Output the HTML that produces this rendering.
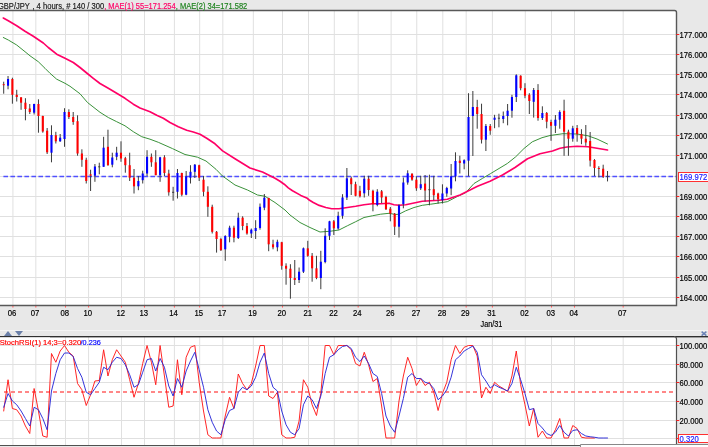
<!DOCTYPE html>
<html><head><meta charset="utf-8"><style>
html,body{margin:0;padding:0;width:708px;height:447px;overflow:hidden;background:#e8e8e8;}
</style></head><body>
<svg width="708" height="447" viewBox="0 0 708 447" style="display:block;font-family:'Liberation Sans',sans-serif;will-change:transform">
<rect x="0" y="0" width="708" height="447" fill="#e8e8e8"/>
<rect x="0" y="10" width="676" height="295" fill="#ffffff"/>
<rect x="0" y="297" width="676" height="1" fill="#e0e0e0"/><rect x="0" y="277" width="676" height="1" fill="#e0e0e0"/><rect x="0" y="256" width="676" height="1" fill="#e0e0e0"/><rect x="0" y="236" width="676" height="1" fill="#e0e0e0"/><rect x="0" y="216" width="676" height="1" fill="#e0e0e0"/><rect x="0" y="196" width="676" height="1" fill="#e0e0e0"/><rect x="0" y="176" width="676" height="1" fill="#e0e0e0"/><rect x="0" y="155" width="676" height="1" fill="#e0e0e0"/><rect x="0" y="135" width="676" height="1" fill="#e0e0e0"/><rect x="0" y="115" width="676" height="1" fill="#e0e0e0"/><rect x="0" y="94" width="676" height="1" fill="#e0e0e0"/><rect x="0" y="74" width="676" height="1" fill="#e0e0e0"/><rect x="0" y="54" width="676" height="1" fill="#e0e0e0"/><rect x="0" y="34" width="676" height="1" fill="#e0e0e0"/><rect x="12.42" y="10" width="1" height="295" fill="#e0e0e0"/><rect x="35.33" y="10" width="1" height="295" fill="#e0e0e0"/><rect x="65" y="10" width="1" height="295" fill="#e0e0e0"/><rect x="88.08" y="10" width="1" height="295" fill="#e0e0e0"/><rect x="121" y="10" width="1" height="295" fill="#e0e0e0"/><rect x="144" y="10" width="1" height="295" fill="#e0e0e0"/><rect x="173.9" y="10" width="1" height="295" fill="#e0e0e0"/><rect x="199.17" y="10" width="1" height="295" fill="#e0e0e0"/><rect x="222.33" y="10" width="1" height="295" fill="#e0e0e0"/><rect x="252.83" y="10" width="1" height="295" fill="#e0e0e0"/><rect x="282" y="10" width="1" height="295" fill="#e0e0e0"/><rect x="308" y="10" width="1" height="295" fill="#e0e0e0"/><rect x="333.8" y="10" width="1" height="295" fill="#e0e0e0"/><rect x="357.67" y="10" width="1" height="295" fill="#e0e0e0"/><rect x="390.6" y="10" width="1" height="295" fill="#e0e0e0"/><rect x="416.25" y="10" width="1" height="295" fill="#e0e0e0"/><rect x="442.3" y="10" width="1" height="295" fill="#e0e0e0"/><rect x="465.67" y="10" width="1" height="295" fill="#e0e0e0"/><rect x="491.9" y="10" width="1" height="295" fill="#e0e0e0"/><rect x="524.8" y="10" width="1" height="295" fill="#e0e0e0"/><rect x="551" y="10" width="1" height="295" fill="#e0e0e0"/><rect x="574" y="10" width="1" height="295" fill="#e0e0e0"/><rect x="622.67" y="10" width="1" height="295" fill="#e0e0e0"/>
<line x1="3.4" y1="176.5" x2="676" y2="176.5" stroke="#5050ff" stroke-width="1.5" stroke-dasharray="4.6 2.4"/>
<polyline points="3.30,37.50 8.30,40.00 16.70,45.00 25.00,51.70 30.00,55.80 38.30,61.70 45.00,68.30 50.00,73.30 56.70,79.20 65.00,83.30 70.00,86.25 80.00,93.75 87.50,102.50 100.00,112.30 108.30,117.50 116.70,121.70 125.00,125.80 133.30,131.70 141.70,136.70 150.00,139.20 158.30,142.30 172.50,148.60 185.00,154.50 197.50,157.20 206.00,161.00 216.00,169.30 222.50,176.00 235.00,185.00 247.50,190.00 257.50,195.00 265.00,196.25 275.00,202.50 285.00,210.00 290.00,215.00 300.00,222.50 310.00,227.50 320.00,232.00 330.00,231.25 339.00,230.00 347.30,225.80 355.70,221.70 364.00,217.50 372.30,215.80 380.70,214.20 389.00,213.30 395.70,214.50 399.00,214.20 405.70,210.80 414.00,207.50 422.30,205.30 430.70,204.20 439.00,203.00 447.30,201.70 457.30,196.50 465.70,192.70 474.00,183.50 482.30,178.50 490.70,173.50 499.00,168.50 507.30,163.50 515.70,156.80 524.00,148.50 532.30,141.80 542.00,137.70 550.00,135.50 563.00,133.70 577.00,134.00 588.00,135.80 597.00,139.00 607.50,144.00" fill="none" stroke="#3a923a" stroke-width="1.0" stroke-linejoin="round" stroke-linecap="round"/>
<polyline points="3.30,18.00 8.30,20.80 16.70,25.80 25.00,31.30 33.30,36.30 43.30,43.00 48.30,47.50 56.70,54.20 65.00,58.30 73.30,62.50 80.00,67.50 86.70,73.00 93.30,78.30 100.00,83.50 108.30,88.30 116.70,93.30 125.00,98.30 133.30,104.20 140.00,108.00 150.00,111.70 156.70,115.30 163.30,118.30 170.00,122.50 178.30,126.70 186.70,130.30 193.30,132.00 200.00,134.20 206.70,138.30 215.00,143.80 222.60,150.90 235.00,158.75 250.00,168.00 262.50,172.00 275.00,178.20 280.00,181.25 284.20,184.20 288.30,187.90 292.50,190.80 300.80,195.40 306.70,197.90 309.20,200.00 313.30,202.50 319.20,205.40 325.80,207.50 331.70,208.75 339.00,208.75 347.30,207.50 355.70,206.30 364.00,204.70 372.30,203.70 380.70,203.70 389.00,203.30 394.00,204.70 399.00,205.30 405.70,204.70 414.00,203.00 422.30,201.20 430.70,200.80 439.00,200.30 447.30,199.20 460.00,195.00 467.50,191.25 477.50,186.25 490.00,181.25 502.50,175.00 515.00,167.50 527.50,158.75 540.00,153.75 552.50,151.00 560.00,148.30 567.00,147.00 577.00,146.30 588.00,146.70 600.00,148.75 607.50,150.00" fill="none" stroke="#ff0066" stroke-width="1.65" stroke-linejoin="round" stroke-linecap="round"/>
<rect x="3.20" y="81.7" width="1" height="12.0" fill="#3c3c3c"/><rect x="2.65" y="84.2" width="2.1" height="1.0" fill="#ff0000"/><rect x="7.54" y="76.0" width="1" height="13.3" fill="#3c3c3c"/><rect x="6.99" y="79.0" width="2.1" height="6.7" fill="#0000ff"/><rect x="11.89" y="77.7" width="1" height="26.0" fill="#3c3c3c"/><rect x="11.34" y="79.0" width="2.1" height="15.8" fill="#ff0000"/><rect x="16.23" y="89.8" width="1" height="11.7" fill="#3c3c3c"/><rect x="15.68" y="94.8" width="2.1" height="2.2" fill="#ff0000"/><rect x="20.58" y="97.3" width="1" height="12.5" fill="#3c3c3c"/><rect x="20.03" y="97.3" width="2.1" height="5.4" fill="#ff0000"/><rect x="24.92" y="98.2" width="1" height="22.1" fill="#3c3c3c"/><rect x="24.37" y="102.7" width="2.1" height="6.3" fill="#ff0000"/><rect x="29.26" y="104.0" width="1" height="10.0" fill="#3c3c3c"/><rect x="28.71" y="108.5" width="2.1" height="3.5" fill="#ff0000"/><rect x="33.61" y="103.7" width="1" height="10.8" fill="#3c3c3c"/><rect x="33.06" y="104.0" width="2.1" height="8.7" fill="#0000ff"/><rect x="37.95" y="99.3" width="1" height="33.4" fill="#3c3c3c"/><rect x="37.40" y="104.0" width="2.1" height="12.0" fill="#ff0000"/><rect x="42.30" y="115.7" width="1" height="17.0" fill="#3c3c3c"/><rect x="41.75" y="116.0" width="2.1" height="15.5" fill="#ff0000"/><rect x="46.64" y="128.0" width="1" height="26.0" fill="#3c3c3c"/><rect x="46.09" y="130.7" width="2.1" height="21.6" fill="#ff0000"/><rect x="50.98" y="125.3" width="1" height="37.0" fill="#3c3c3c"/><rect x="50.43" y="135.0" width="2.1" height="17.7" fill="#0000ff"/><rect x="55.33" y="131.8" width="1" height="11.7" fill="#3c3c3c"/><rect x="54.78" y="135.2" width="2.1" height="6.1" fill="#ff0000"/><rect x="59.67" y="134.0" width="1" height="7.8" fill="#3c3c3c"/><rect x="59.12" y="137.7" width="2.1" height="3.6" fill="#0000ff"/><rect x="64.02" y="108.2" width="1" height="38.6" fill="#3c3c3c"/><rect x="63.47" y="112.0" width="2.1" height="27.0" fill="#0000ff"/><rect x="68.36" y="109.3" width="1" height="9.7" fill="#3c3c3c"/><rect x="67.81" y="112.0" width="2.1" height="5.0" fill="#ff0000"/><rect x="72.70" y="112.0" width="1" height="12.8" fill="#3c3c3c"/><rect x="72.15" y="117.0" width="2.1" height="5.0" fill="#ff0000"/><rect x="77.05" y="115.3" width="1" height="40.4" fill="#3c3c3c"/><rect x="76.50" y="121.2" width="2.1" height="32.3" fill="#ff0000"/><rect x="81.39" y="149.3" width="1" height="17.5" fill="#3c3c3c"/><rect x="80.84" y="153.5" width="2.1" height="6.3" fill="#ff0000"/><rect x="85.74" y="157.7" width="1" height="25.8" fill="#3c3c3c"/><rect x="85.19" y="159.8" width="2.1" height="21.2" fill="#ff0000"/><rect x="90.08" y="169.7" width="1" height="21.3" fill="#3c3c3c"/><rect x="89.53" y="174.3" width="2.1" height="1.4" fill="#ff0000"/><rect x="94.42" y="164.0" width="1" height="17.8" fill="#3c3c3c"/><rect x="93.87" y="166.5" width="2.1" height="9.2" fill="#0000ff"/><rect x="98.77" y="162.7" width="1" height="11.6" fill="#3c3c3c"/><rect x="98.22" y="166.3" width="2.1" height="1.0" fill="#3c3c3c"/><rect x="103.11" y="136.8" width="1" height="30.0" fill="#3c3c3c"/><rect x="102.56" y="147.7" width="2.1" height="19.1" fill="#0000ff"/><rect x="107.46" y="129.7" width="1" height="36.0" fill="#3c3c3c"/><rect x="106.91" y="146.8" width="2.1" height="18.4" fill="#ff0000"/><rect x="111.80" y="152.7" width="1" height="14.6" fill="#3c3c3c"/><rect x="111.25" y="157.5" width="2.1" height="7.2" fill="#0000ff"/><rect x="116.14" y="146.8" width="1" height="13.4" fill="#3c3c3c"/><rect x="115.59" y="152.7" width="2.1" height="4.1" fill="#0000ff"/><rect x="120.49" y="141.3" width="1" height="20.5" fill="#3c3c3c"/><rect x="119.94" y="152.7" width="2.1" height="5.8" fill="#ff0000"/><rect x="124.83" y="156.8" width="1" height="15.9" fill="#3c3c3c"/><rect x="124.28" y="158.2" width="2.1" height="7.0" fill="#ff0000"/><rect x="129.18" y="152.7" width="1" height="28.3" fill="#3c3c3c"/><rect x="128.63" y="165.2" width="2.1" height="12.5" fill="#ff0000"/><rect x="133.52" y="169.0" width="1" height="24.5" fill="#3c3c3c"/><rect x="132.97" y="177.7" width="2.1" height="8.6" fill="#ff0000"/><rect x="137.86" y="176.0" width="1" height="14.2" fill="#3c3c3c"/><rect x="137.31" y="181.0" width="2.1" height="5.3" fill="#0000ff"/><rect x="142.21" y="170.7" width="1" height="12.8" fill="#3c3c3c"/><rect x="141.66" y="173.5" width="2.1" height="6.7" fill="#0000ff"/><rect x="146.55" y="150.2" width="1" height="25.8" fill="#3c3c3c"/><rect x="146.00" y="156.8" width="2.1" height="16.7" fill="#0000ff"/><rect x="150.90" y="153.5" width="1" height="13.3" fill="#3c3c3c"/><rect x="150.35" y="156.8" width="2.1" height="5.5" fill="#ff0000"/><rect x="155.24" y="150.2" width="1" height="25.0" fill="#3c3c3c"/><rect x="154.69" y="162.3" width="2.1" height="12.9" fill="#ff0000"/><rect x="159.58" y="156.8" width="1" height="25.0" fill="#3c3c3c"/><rect x="159.03" y="157.3" width="2.1" height="17.9" fill="#0000ff"/><rect x="163.93" y="155.2" width="1" height="20.8" fill="#3c3c3c"/><rect x="163.38" y="157.3" width="2.1" height="15.7" fill="#ff0000"/><rect x="168.27" y="169.7" width="1" height="26.0" fill="#3c3c3c"/><rect x="167.72" y="173.5" width="2.1" height="18.8" fill="#ff0000"/><rect x="172.62" y="186.8" width="1" height="13.9" fill="#3c3c3c"/><rect x="172.07" y="191.8" width="2.1" height="1.0" fill="#3c3c3c"/><rect x="176.96" y="169.0" width="1" height="29.5" fill="#3c3c3c"/><rect x="176.41" y="173.0" width="2.1" height="18.8" fill="#0000ff"/><rect x="181.30" y="172.7" width="1" height="23.6" fill="#3c3c3c"/><rect x="180.75" y="173.0" width="2.1" height="21.7" fill="#ff0000"/><rect x="185.65" y="171.0" width="1" height="24.2" fill="#3c3c3c"/><rect x="185.10" y="176.3" width="2.1" height="18.4" fill="#0000ff"/><rect x="189.99" y="165.2" width="1" height="18.3" fill="#3c3c3c"/><rect x="189.44" y="171.8" width="2.1" height="5.9" fill="#0000ff"/><rect x="194.34" y="164.0" width="1" height="14.0" fill="#3c3c3c"/><rect x="193.79" y="164.7" width="2.1" height="7.1" fill="#0000ff"/><rect x="198.68" y="164.7" width="1" height="16.3" fill="#3c3c3c"/><rect x="198.13" y="165.2" width="2.1" height="12.5" fill="#ff0000"/><rect x="203.02" y="176.0" width="1" height="20.3" fill="#3c3c3c"/><rect x="202.47" y="179.7" width="2.1" height="12.1" fill="#ff0000"/><rect x="207.37" y="186.3" width="1" height="30.5" fill="#3c3c3c"/><rect x="206.82" y="191.8" width="2.1" height="15.0" fill="#ff0000"/><rect x="211.71" y="204.7" width="1" height="28.8" fill="#3c3c3c"/><rect x="211.16" y="206.8" width="2.1" height="25.0" fill="#ff0000"/><rect x="216.06" y="231.0" width="1" height="21.6" fill="#3c3c3c"/><rect x="215.51" y="231.8" width="2.1" height="7.2" fill="#ff0000"/><rect x="220.40" y="237.7" width="1" height="13.3" fill="#3c3c3c"/><rect x="219.85" y="239.0" width="2.1" height="11.2" fill="#ff0000"/><rect x="224.74" y="235.2" width="1" height="25.6" fill="#3c3c3c"/><rect x="224.19" y="236.0" width="2.1" height="13.3" fill="#0000ff"/><rect x="229.09" y="225.7" width="1" height="16.6" fill="#3c3c3c"/><rect x="228.54" y="227.7" width="2.1" height="9.1" fill="#0000ff"/><rect x="233.43" y="225.7" width="1" height="16.6" fill="#3c3c3c"/><rect x="232.88" y="227.7" width="2.1" height="10.0" fill="#ff0000"/><rect x="237.78" y="212.7" width="1" height="26.3" fill="#3c3c3c"/><rect x="237.23" y="217.7" width="2.1" height="20.3" fill="#0000ff"/><rect x="242.12" y="216.3" width="1" height="13.9" fill="#3c3c3c"/><rect x="241.57" y="217.7" width="2.1" height="8.3" fill="#ff0000"/><rect x="246.46" y="223.0" width="1" height="11.7" fill="#3c3c3c"/><rect x="245.91" y="226.0" width="2.1" height="7.5" fill="#ff0000"/><rect x="250.81" y="228.5" width="1" height="9.5" fill="#3c3c3c"/><rect x="250.26" y="229.7" width="2.1" height="3.8" fill="#0000ff"/><rect x="255.15" y="220.2" width="1" height="18.8" fill="#3c3c3c"/><rect x="254.60" y="228.0" width="2.1" height="3.0" fill="#0000ff"/><rect x="259.50" y="203.5" width="1" height="26.2" fill="#3c3c3c"/><rect x="258.95" y="206.8" width="2.1" height="21.2" fill="#0000ff"/><rect x="263.84" y="194.0" width="1" height="16.2" fill="#3c3c3c"/><rect x="263.29" y="197.7" width="2.1" height="10.0" fill="#0000ff"/><rect x="268.18" y="197.7" width="1" height="53.5" fill="#3c3c3c"/><rect x="267.63" y="198.0" width="2.1" height="46.3" fill="#ff0000"/><rect x="272.53" y="239.7" width="1" height="9.6" fill="#3c3c3c"/><rect x="271.98" y="244.3" width="2.1" height="3.0" fill="#ff0000"/><rect x="276.87" y="239.7" width="1" height="11.6" fill="#3c3c3c"/><rect x="276.32" y="241.8" width="2.1" height="5.5" fill="#0000ff"/><rect x="281.22" y="241.8" width="1" height="27.9" fill="#3c3c3c"/><rect x="280.67" y="242.2" width="2.1" height="23.6" fill="#ff0000"/><rect x="285.56" y="263.3" width="1" height="21.4" fill="#3c3c3c"/><rect x="285.01" y="265.8" width="2.1" height="2.9" fill="#ff0000"/><rect x="289.90" y="264.2" width="1" height="34.5" fill="#3c3c3c"/><rect x="289.35" y="268.7" width="2.1" height="9.3" fill="#ff0000"/><rect x="294.25" y="260.0" width="1" height="25.0" fill="#3c3c3c"/><rect x="293.70" y="278.0" width="2.1" height="2.0" fill="#ff0000"/><rect x="298.59" y="267.5" width="1" height="15.5" fill="#3c3c3c"/><rect x="298.04" y="271.7" width="2.1" height="8.3" fill="#0000ff"/><rect x="302.94" y="247.5" width="1" height="25.5" fill="#3c3c3c"/><rect x="302.39" y="248.3" width="2.1" height="23.4" fill="#0000ff"/><rect x="307.28" y="240.8" width="1" height="15.9" fill="#3c3c3c"/><rect x="306.73" y="248.3" width="2.1" height="7.5" fill="#ff0000"/><rect x="311.62" y="253.0" width="1" height="28.7" fill="#3c3c3c"/><rect x="311.07" y="255.8" width="2.1" height="12.5" fill="#ff0000"/><rect x="315.97" y="255.8" width="1" height="23.4" fill="#3c3c3c"/><rect x="315.42" y="268.3" width="2.1" height="9.7" fill="#ff0000"/><rect x="320.31" y="250.8" width="1" height="38.4" fill="#3c3c3c"/><rect x="319.76" y="261.7" width="2.1" height="16.3" fill="#0000ff"/><rect x="324.66" y="228.3" width="1" height="35.0" fill="#3c3c3c"/><rect x="324.11" y="235.8" width="2.1" height="26.2" fill="#0000ff"/><rect x="329.00" y="220.8" width="1" height="19.2" fill="#3c3c3c"/><rect x="328.45" y="221.3" width="2.1" height="14.5" fill="#0000ff"/><rect x="333.34" y="220.0" width="1" height="15.0" fill="#3c3c3c"/><rect x="332.79" y="221.3" width="2.1" height="7.0" fill="#ff0000"/><rect x="337.69" y="211.7" width="1" height="18.0" fill="#3c3c3c"/><rect x="337.14" y="215.8" width="2.1" height="12.7" fill="#0000ff"/><rect x="342.03" y="194.2" width="1" height="24.5" fill="#3c3c3c"/><rect x="341.48" y="197.5" width="2.1" height="18.3" fill="#0000ff"/><rect x="346.38" y="168.0" width="1" height="32.0" fill="#3c3c3c"/><rect x="345.83" y="178.3" width="2.1" height="19.2" fill="#0000ff"/><rect x="350.72" y="176.7" width="1" height="18.3" fill="#3c3c3c"/><rect x="350.17" y="178.3" width="2.1" height="5.9" fill="#ff0000"/><rect x="355.06" y="181.7" width="1" height="14.6" fill="#3c3c3c"/><rect x="354.51" y="184.2" width="2.1" height="11.6" fill="#ff0000"/><rect x="359.41" y="185.8" width="1" height="11.7" fill="#3c3c3c"/><rect x="358.86" y="190.8" width="2.1" height="5.5" fill="#ff0000"/><rect x="363.75" y="175.8" width="1" height="21.7" fill="#3c3c3c"/><rect x="363.20" y="178.7" width="2.1" height="14.6" fill="#0000ff"/><rect x="368.10" y="175.8" width="1" height="20.0" fill="#3c3c3c"/><rect x="367.55" y="178.7" width="2.1" height="11.3" fill="#ff0000"/><rect x="372.44" y="189.7" width="1" height="21.6" fill="#3c3c3c"/><rect x="371.89" y="190.8" width="2.1" height="13.4" fill="#ff0000"/><rect x="376.78" y="189.2" width="1" height="17.1" fill="#3c3c3c"/><rect x="376.23" y="191.7" width="2.1" height="13.3" fill="#0000ff"/><rect x="381.13" y="190.0" width="1" height="13.0" fill="#3c3c3c"/><rect x="380.58" y="191.3" width="2.1" height="6.2" fill="#ff0000"/><rect x="385.47" y="195.8" width="1" height="14.2" fill="#3c3c3c"/><rect x="384.92" y="197.0" width="2.1" height="12.2" fill="#ff0000"/><rect x="389.82" y="207.0" width="1" height="14.3" fill="#3c3c3c"/><rect x="389.27" y="208.7" width="2.1" height="5.0" fill="#ff0000"/><rect x="394.16" y="213.0" width="1" height="22.0" fill="#3c3c3c"/><rect x="393.61" y="213.7" width="2.1" height="13.0" fill="#ff0000"/><rect x="398.50" y="204.2" width="1" height="33.3" fill="#3c3c3c"/><rect x="397.95" y="205.3" width="2.1" height="21.4" fill="#0000ff"/><rect x="402.85" y="177.5" width="1" height="30.8" fill="#3c3c3c"/><rect x="402.30" y="182.5" width="2.1" height="21.7" fill="#0000ff"/><rect x="407.19" y="170.3" width="1" height="14.4" fill="#3c3c3c"/><rect x="406.64" y="173.3" width="2.1" height="9.2" fill="#0000ff"/><rect x="411.54" y="173.3" width="1" height="7.5" fill="#3c3c3c"/><rect x="410.99" y="173.7" width="2.1" height="6.0" fill="#ff0000"/><rect x="415.88" y="176.3" width="1" height="14.5" fill="#3c3c3c"/><rect x="415.33" y="179.7" width="2.1" height="8.6" fill="#ff0000"/><rect x="420.22" y="175.8" width="1" height="14.2" fill="#3c3c3c"/><rect x="419.67" y="184.2" width="2.1" height="4.1" fill="#0000ff"/><rect x="424.57" y="175.0" width="1" height="26.5" fill="#3c3c3c"/><rect x="424.02" y="183.6" width="2.1" height="6.9" fill="#ff0000"/><rect x="428.91" y="174.7" width="1" height="30.6" fill="#3c3c3c"/><rect x="428.36" y="189.2" width="2.1" height="1.0" fill="#3c3c3c"/><rect x="433.26" y="175.8" width="1" height="24.4" fill="#3c3c3c"/><rect x="432.71" y="189.2" width="2.1" height="6.0" fill="#ff0000"/><rect x="437.60" y="192.7" width="1" height="10.8" fill="#3c3c3c"/><rect x="437.05" y="193.5" width="2.1" height="5.8" fill="#ff0000"/><rect x="441.94" y="184.3" width="1" height="19.2" fill="#3c3c3c"/><rect x="441.39" y="193.5" width="2.1" height="6.7" fill="#0000ff"/><rect x="446.29" y="186.8" width="1" height="10.0" fill="#3c3c3c"/><rect x="445.74" y="188.0" width="2.1" height="5.5" fill="#0000ff"/><rect x="450.63" y="164.0" width="1" height="31.2" fill="#3c3c3c"/><rect x="450.08" y="176.3" width="2.1" height="12.2" fill="#0000ff"/><rect x="454.98" y="152.3" width="1" height="29.0" fill="#3c3c3c"/><rect x="454.43" y="161.0" width="2.1" height="15.3" fill="#0000ff"/><rect x="459.32" y="155.7" width="1" height="17.8" fill="#3c3c3c"/><rect x="458.77" y="160.7" width="2.1" height="2.3" fill="#ff0000"/><rect x="463.66" y="159.3" width="1" height="10.0" fill="#3c3c3c"/><rect x="463.11" y="160.2" width="2.1" height="3.3" fill="#0000ff"/><rect x="468.01" y="93.2" width="1" height="83.1" fill="#3c3c3c"/><rect x="467.46" y="117.0" width="2.1" height="43.7" fill="#0000ff"/><rect x="472.35" y="91.0" width="1" height="65.0" fill="#3c3c3c"/><rect x="471.80" y="107.0" width="2.1" height="9.0" fill="#0000ff"/><rect x="476.70" y="99.8" width="1" height="28.9" fill="#3c3c3c"/><rect x="476.15" y="107.0" width="2.1" height="7.0" fill="#ff0000"/><rect x="481.04" y="103.7" width="1" height="39.8" fill="#3c3c3c"/><rect x="480.49" y="114.0" width="2.1" height="25.7" fill="#ff0000"/><rect x="485.38" y="124.0" width="1" height="27.0" fill="#3c3c3c"/><rect x="484.83" y="126.0" width="2.1" height="13.7" fill="#0000ff"/><rect x="489.73" y="124.0" width="1" height="10.8" fill="#3c3c3c"/><rect x="489.18" y="126.0" width="2.1" height="4.7" fill="#ff0000"/><rect x="494.07" y="114.8" width="1" height="13.4" fill="#3c3c3c"/><rect x="493.52" y="117.7" width="2.1" height="2.1" fill="#0000ff"/><rect x="498.42" y="113.7" width="1" height="13.6" fill="#3c3c3c"/><rect x="497.87" y="117.7" width="2.1" height="1.0" fill="#3c3c3c"/><rect x="502.76" y="111.5" width="1" height="11.7" fill="#3c3c3c"/><rect x="502.21" y="116.0" width="2.1" height="3.0" fill="#0000ff"/><rect x="507.10" y="104.0" width="1" height="21.3" fill="#3c3c3c"/><rect x="506.55" y="110.7" width="2.1" height="5.3" fill="#0000ff"/><rect x="511.45" y="94.8" width="1" height="22.9" fill="#3c3c3c"/><rect x="510.90" y="97.0" width="2.1" height="13.7" fill="#0000ff"/><rect x="515.79" y="74.3" width="1" height="27.7" fill="#3c3c3c"/><rect x="515.24" y="75.3" width="2.1" height="21.7" fill="#0000ff"/><rect x="520.14" y="75.3" width="1" height="15.0" fill="#3c3c3c"/><rect x="519.59" y="75.7" width="2.1" height="12.5" fill="#ff0000"/><rect x="524.48" y="83.2" width="1" height="15.0" fill="#3c3c3c"/><rect x="523.93" y="88.2" width="2.1" height="7.5" fill="#ff0000"/><rect x="528.82" y="93.2" width="1" height="20.8" fill="#3c3c3c"/><rect x="528.27" y="94.8" width="2.1" height="6.2" fill="#ff0000"/><rect x="533.17" y="88.0" width="1" height="29.6" fill="#3c3c3c"/><rect x="532.62" y="90.0" width="2.1" height="11.8" fill="#0000ff"/><rect x="537.51" y="84.1" width="1" height="36.6" fill="#3c3c3c"/><rect x="536.96" y="90.0" width="2.1" height="28.0" fill="#ff0000"/><rect x="541.86" y="106.3" width="1" height="13.7" fill="#3c3c3c"/><rect x="541.31" y="113.0" width="2.1" height="5.0" fill="#0000ff"/><rect x="546.20" y="112.0" width="1" height="16.3" fill="#3c3c3c"/><rect x="545.65" y="113.0" width="2.1" height="8.7" fill="#ff0000"/><rect x="550.54" y="119.7" width="1" height="21.1" fill="#3c3c3c"/><rect x="549.99" y="122.0" width="2.1" height="3.8" fill="#ff0000"/><rect x="554.89" y="115.0" width="1" height="18.0" fill="#3c3c3c"/><rect x="554.34" y="119.7" width="2.1" height="6.1" fill="#0000ff"/><rect x="559.23" y="110.3" width="1" height="18.4" fill="#3c3c3c"/><rect x="558.68" y="112.0" width="2.1" height="7.7" fill="#0000ff"/><rect x="563.58" y="99.7" width="1" height="56.1" fill="#3c3c3c"/><rect x="563.03" y="110.8" width="2.1" height="20.9" fill="#ff0000"/><rect x="567.92" y="129.7" width="1" height="26.1" fill="#3c3c3c"/><rect x="567.37" y="131.7" width="2.1" height="7.0" fill="#ff0000"/><rect x="572.26" y="125.8" width="1" height="15.9" fill="#3c3c3c"/><rect x="571.71" y="128.3" width="2.1" height="10.4" fill="#0000ff"/><rect x="576.61" y="125.0" width="1" height="16.7" fill="#3c3c3c"/><rect x="576.06" y="128.0" width="2.1" height="6.2" fill="#ff0000"/><rect x="580.95" y="129.2" width="1" height="15.0" fill="#3c3c3c"/><rect x="580.40" y="134.2" width="2.1" height="4.5" fill="#ff0000"/><rect x="585.30" y="125.0" width="1" height="20.8" fill="#3c3c3c"/><rect x="584.75" y="138.7" width="2.1" height="3.8" fill="#ff0000"/><rect x="589.64" y="132.0" width="1" height="34.5" fill="#3c3c3c"/><rect x="589.09" y="141.0" width="2.1" height="19.6" fill="#ff0000"/><rect x="593.98" y="159.1" width="1" height="16.9" fill="#3c3c3c"/><rect x="593.43" y="160.0" width="2.1" height="8.0" fill="#ff0000"/><rect x="598.33" y="166.2" width="1" height="11.2" fill="#3c3c3c"/><rect x="597.78" y="168.0" width="2.1" height="1.0" fill="#ff0000"/><rect x="602.67" y="164.7" width="1" height="13.3" fill="#3c3c3c"/><rect x="602.12" y="168.7" width="2.1" height="8.0" fill="#ff0000"/><rect x="607.02" y="171.0" width="1" height="10.4" fill="#3c3c3c"/><rect x="606.47" y="176.0" width="2.1" height="1.0" fill="#3c3c3c"/>
<path d="M0,10.5 H674.5 Q676.5,10.5 676.5,12.5 V305.5 H0" fill="none" stroke="#585858" stroke-width="1.4"/>
<rect x="676.3" y="297" width="3" height="1" fill="#ff2020"/><text x="679.6" y="301.3" font-size="8.2" fill="#000000" stroke="#000000" stroke-width="0.18" textLength="27.6" lengthAdjust="spacingAndGlyphs">164.000</text><rect x="676.3" y="277" width="3" height="1" fill="#ff2020"/><text x="679.6" y="281.3" font-size="8.2" fill="#000000" stroke="#000000" stroke-width="0.18" textLength="27.6" lengthAdjust="spacingAndGlyphs">165.000</text><rect x="676.3" y="256" width="3" height="1" fill="#ff2020"/><text x="679.6" y="260.3" font-size="8.2" fill="#000000" stroke="#000000" stroke-width="0.18" textLength="27.6" lengthAdjust="spacingAndGlyphs">166.000</text><rect x="676.3" y="236" width="3" height="1" fill="#ff2020"/><text x="679.6" y="240.3" font-size="8.2" fill="#000000" stroke="#000000" stroke-width="0.18" textLength="27.6" lengthAdjust="spacingAndGlyphs">167.000</text><rect x="676.3" y="216" width="3" height="1" fill="#ff2020"/><text x="679.6" y="220.3" font-size="8.2" fill="#000000" stroke="#000000" stroke-width="0.18" textLength="27.6" lengthAdjust="spacingAndGlyphs">168.000</text><rect x="676.3" y="196" width="3" height="1" fill="#ff2020"/><text x="679.6" y="200.3" font-size="8.2" fill="#000000" stroke="#000000" stroke-width="0.18" textLength="27.6" lengthAdjust="spacingAndGlyphs">169.000</text><rect x="676.3" y="155" width="3" height="1" fill="#ff2020"/><text x="679.6" y="159.3" font-size="8.2" fill="#000000" stroke="#000000" stroke-width="0.18" textLength="27.6" lengthAdjust="spacingAndGlyphs">171.000</text><rect x="676.3" y="135" width="3" height="1" fill="#ff2020"/><text x="679.6" y="139.3" font-size="8.2" fill="#000000" stroke="#000000" stroke-width="0.18" textLength="27.6" lengthAdjust="spacingAndGlyphs">172.000</text><rect x="676.3" y="115" width="3" height="1" fill="#ff2020"/><text x="679.6" y="119.3" font-size="8.2" fill="#000000" stroke="#000000" stroke-width="0.18" textLength="27.6" lengthAdjust="spacingAndGlyphs">173.000</text><rect x="676.3" y="94" width="3" height="1" fill="#ff2020"/><text x="679.6" y="98.3" font-size="8.2" fill="#000000" stroke="#000000" stroke-width="0.18" textLength="27.6" lengthAdjust="spacingAndGlyphs">174.000</text><rect x="676.3" y="74" width="3" height="1" fill="#ff2020"/><text x="679.6" y="78.3" font-size="8.2" fill="#000000" stroke="#000000" stroke-width="0.18" textLength="27.6" lengthAdjust="spacingAndGlyphs">175.000</text><rect x="676.3" y="54" width="3" height="1" fill="#ff2020"/><text x="679.6" y="58.3" font-size="8.2" fill="#000000" stroke="#000000" stroke-width="0.18" textLength="27.6" lengthAdjust="spacingAndGlyphs">176.000</text><rect x="676.3" y="34" width="3" height="1" fill="#ff2020"/><text x="679.6" y="38.3" font-size="8.2" fill="#000000" stroke="#000000" stroke-width="0.18" textLength="27.6" lengthAdjust="spacingAndGlyphs">177.000</text>
<rect x="678.5" y="172.5" width="32" height="9" fill="#ffffff" stroke="#ff3030" stroke-width="1"/>
<text x="679.6" y="180.3" font-size="8.2" fill="#1a1aff" stroke="#1a1aff" stroke-width="0.18" textLength="27.6" lengthAdjust="spacingAndGlyphs">169.972</text>
<rect x="12.42" y="306" width="1" height="1.5" fill="#ff5050"/><text x="12.12" y="316" font-size="8.2" fill="#000000" stroke="#000000" stroke-width="0.18" textLength="8.6" lengthAdjust="spacingAndGlyphs" text-anchor="middle">06</text><rect x="35.33" y="306" width="1" height="1.5" fill="#ff5050"/><text x="35.03" y="316" font-size="8.2" fill="#000000" stroke="#000000" stroke-width="0.18" textLength="8.6" lengthAdjust="spacingAndGlyphs" text-anchor="middle">07</text><rect x="65" y="306" width="1" height="1.5" fill="#ff5050"/><text x="64.7" y="316" font-size="8.2" fill="#000000" stroke="#000000" stroke-width="0.18" textLength="8.6" lengthAdjust="spacingAndGlyphs" text-anchor="middle">08</text><rect x="88.08" y="306" width="1" height="1.5" fill="#ff5050"/><text x="87.78" y="316" font-size="8.2" fill="#000000" stroke="#000000" stroke-width="0.18" textLength="8.6" lengthAdjust="spacingAndGlyphs" text-anchor="middle">10</text><rect x="121" y="306" width="1" height="1.5" fill="#ff5050"/><text x="120.7" y="316" font-size="8.2" fill="#000000" stroke="#000000" stroke-width="0.18" textLength="8.6" lengthAdjust="spacingAndGlyphs" text-anchor="middle">12</text><rect x="144" y="306" width="1" height="1.5" fill="#ff5050"/><text x="143.7" y="316" font-size="8.2" fill="#000000" stroke="#000000" stroke-width="0.18" textLength="8.6" lengthAdjust="spacingAndGlyphs" text-anchor="middle">13</text><rect x="173.9" y="306" width="1" height="1.5" fill="#ff5050"/><text x="173.6" y="316" font-size="8.2" fill="#000000" stroke="#000000" stroke-width="0.18" textLength="8.6" lengthAdjust="spacingAndGlyphs" text-anchor="middle">14</text><rect x="199.17" y="306" width="1" height="1.5" fill="#ff5050"/><text x="198.87" y="316" font-size="8.2" fill="#000000" stroke="#000000" stroke-width="0.18" textLength="8.6" lengthAdjust="spacingAndGlyphs" text-anchor="middle">15</text><rect x="222.33" y="306" width="1" height="1.5" fill="#ff5050"/><text x="222.03" y="316" font-size="8.2" fill="#000000" stroke="#000000" stroke-width="0.18" textLength="8.6" lengthAdjust="spacingAndGlyphs" text-anchor="middle">17</text><rect x="252.83" y="306" width="1" height="1.5" fill="#ff5050"/><text x="252.53" y="316" font-size="8.2" fill="#000000" stroke="#000000" stroke-width="0.18" textLength="8.6" lengthAdjust="spacingAndGlyphs" text-anchor="middle">19</text><rect x="282" y="306" width="1" height="1.5" fill="#ff5050"/><text x="281.7" y="316" font-size="8.2" fill="#000000" stroke="#000000" stroke-width="0.18" textLength="8.6" lengthAdjust="spacingAndGlyphs" text-anchor="middle">20</text><rect x="308" y="306" width="1" height="1.5" fill="#ff5050"/><text x="307.7" y="316" font-size="8.2" fill="#000000" stroke="#000000" stroke-width="0.18" textLength="8.6" lengthAdjust="spacingAndGlyphs" text-anchor="middle">21</text><rect x="333.8" y="306" width="1" height="1.5" fill="#ff5050"/><text x="333.5" y="316" font-size="8.2" fill="#000000" stroke="#000000" stroke-width="0.18" textLength="8.6" lengthAdjust="spacingAndGlyphs" text-anchor="middle">22</text><rect x="357.67" y="306" width="1" height="1.5" fill="#ff5050"/><text x="357.37" y="316" font-size="8.2" fill="#000000" stroke="#000000" stroke-width="0.18" textLength="8.6" lengthAdjust="spacingAndGlyphs" text-anchor="middle">24</text><rect x="390.6" y="306" width="1" height="1.5" fill="#ff5050"/><text x="390.3" y="316" font-size="8.2" fill="#000000" stroke="#000000" stroke-width="0.18" textLength="8.6" lengthAdjust="spacingAndGlyphs" text-anchor="middle">26</text><rect x="416.25" y="306" width="1" height="1.5" fill="#ff5050"/><text x="415.95" y="316" font-size="8.2" fill="#000000" stroke="#000000" stroke-width="0.18" textLength="8.6" lengthAdjust="spacingAndGlyphs" text-anchor="middle">27</text><rect x="442.3" y="306" width="1" height="1.5" fill="#ff5050"/><text x="442.0" y="316" font-size="8.2" fill="#000000" stroke="#000000" stroke-width="0.18" textLength="8.6" lengthAdjust="spacingAndGlyphs" text-anchor="middle">28</text><rect x="465.67" y="306" width="1" height="1.5" fill="#ff5050"/><text x="465.37" y="316" font-size="8.2" fill="#000000" stroke="#000000" stroke-width="0.18" textLength="8.6" lengthAdjust="spacingAndGlyphs" text-anchor="middle">29</text><rect x="491.9" y="306" width="1" height="1.5" fill="#ff5050"/><text x="491.6" y="316" font-size="8.2" fill="#000000" stroke="#000000" stroke-width="0.18" textLength="8.6" lengthAdjust="spacingAndGlyphs" text-anchor="middle">31</text><rect x="524.8" y="306" width="1" height="1.5" fill="#ff5050"/><text x="524.5" y="316" font-size="8.2" fill="#000000" stroke="#000000" stroke-width="0.18" textLength="8.6" lengthAdjust="spacingAndGlyphs" text-anchor="middle">02</text><rect x="551" y="306" width="1" height="1.5" fill="#ff5050"/><text x="550.7" y="316" font-size="8.2" fill="#000000" stroke="#000000" stroke-width="0.18" textLength="8.6" lengthAdjust="spacingAndGlyphs" text-anchor="middle">03</text><rect x="574" y="306" width="1" height="1.5" fill="#ff5050"/><text x="573.7" y="316" font-size="8.2" fill="#000000" stroke="#000000" stroke-width="0.18" textLength="8.6" lengthAdjust="spacingAndGlyphs" text-anchor="middle">04</text><rect x="622.67" y="306" width="1" height="1.5" fill="#ff5050"/><text x="622.37" y="316" font-size="8.2" fill="#000000" stroke="#000000" stroke-width="0.18" textLength="8.6" lengthAdjust="spacingAndGlyphs" text-anchor="middle">07</text>
<text x="491.4" y="327" font-size="8.2" fill="#000000" stroke="#000000" stroke-width="0.18" textLength="21.8" lengthAdjust="spacingAndGlyphs" text-anchor="middle">Jan/31</text>
<rect x="0" y="330" width="708" height="1" fill="#f4f4f4"/>
<path d="M4,336 L8,331 L12,336 Z" fill="#6a7fa8"/>
<path d="M15,331 L23,331 L19,336 Z" fill="#6a7fa8"/>
<path d="M701.6,331.6 L706.4,335.6 M706.4,331.6 L701.6,335.6" stroke="#6a82b6" stroke-width="1.4"/>
<rect x="0" y="337" width="676" height="108" fill="#ffffff"/>
<rect x="0" y="345" width="676" height="1" fill="#e0e0e0"/><rect x="0" y="364" width="676" height="1" fill="#e0e0e0"/><rect x="0" y="382" width="676" height="1" fill="#e0e0e0"/><rect x="0" y="401" width="676" height="1" fill="#e0e0e0"/><rect x="0" y="420" width="676" height="1" fill="#e0e0e0"/><rect x="0" y="438" width="676" height="1" fill="#e0e0e0"/><rect x="12.42" y="337" width="1" height="108" fill="#e0e0e0"/><rect x="35.33" y="337" width="1" height="108" fill="#e0e0e0"/><rect x="65" y="337" width="1" height="108" fill="#e0e0e0"/><rect x="88.08" y="337" width="1" height="108" fill="#e0e0e0"/><rect x="121" y="337" width="1" height="108" fill="#e0e0e0"/><rect x="144" y="337" width="1" height="108" fill="#e0e0e0"/><rect x="173.9" y="337" width="1" height="108" fill="#e0e0e0"/><rect x="199.17" y="337" width="1" height="108" fill="#e0e0e0"/><rect x="222.33" y="337" width="1" height="108" fill="#e0e0e0"/><rect x="252.83" y="337" width="1" height="108" fill="#e0e0e0"/><rect x="282" y="337" width="1" height="108" fill="#e0e0e0"/><rect x="308" y="337" width="1" height="108" fill="#e0e0e0"/><rect x="333.8" y="337" width="1" height="108" fill="#e0e0e0"/><rect x="357.67" y="337" width="1" height="108" fill="#e0e0e0"/><rect x="390.6" y="337" width="1" height="108" fill="#e0e0e0"/><rect x="416.25" y="337" width="1" height="108" fill="#e0e0e0"/><rect x="442.3" y="337" width="1" height="108" fill="#e0e0e0"/><rect x="465.67" y="337" width="1" height="108" fill="#e0e0e0"/><rect x="491.9" y="337" width="1" height="108" fill="#e0e0e0"/><rect x="524.8" y="337" width="1" height="108" fill="#e0e0e0"/><rect x="551" y="337" width="1" height="108" fill="#e0e0e0"/><rect x="574" y="337" width="1" height="108" fill="#e0e0e0"/><rect x="622.67" y="337" width="1" height="108" fill="#e0e0e0"/>
<line x1="4" y1="392" x2="676" y2="392" stroke="#ff6060" stroke-width="1.6" stroke-dasharray="4 3"/>
<polyline points="3.70,411.00 8.04,379.75 12.39,408.50 16.73,409.75 21.08,416.00 25.42,426.00 29.76,433.50 34.11,388.50 38.45,411.00 42.80,436.00 47.14,437.25 51.48,353.50 55.83,362.25 60.17,351.00 64.52,345.50 68.86,352.25 73.20,356.00 77.55,383.50 81.89,389.75 86.24,405.50 90.58,394.75 94.92,381.00 99.27,380.50 103.61,349.75 107.96,376.00 112.30,359.75 116.64,349.75 120.99,356.00 125.33,362.25 129.68,379.75 134.02,397.25 138.36,383.50 142.71,363.50 147.05,345.50 151.40,362.25 155.74,384.75 160.08,345.50 164.43,376.00 168.77,407.25 173.12,406.00 177.46,359.75 181.80,394.75 186.15,357.25 190.49,347.25 194.84,345.50 199.18,382.25 203.52,411.00 207.87,434.75 212.21,438.00 216.56,438.00 220.90,438.00 225.24,416.00 229.59,397.25 233.93,408.50 238.28,374.00 242.62,383.50 246.96,389.75 251.31,383.50 255.65,366.00 260.00,345.50 264.34,345.50 268.68,396.00 273.03,398.50 277.37,392.25 281.72,434.75 286.06,438.00 290.40,438.00 294.75,437.25 299.09,421.00 303.44,379.75 307.78,387.25 312.12,404.75 316.47,415.50 320.81,393.50 325.16,345.50 329.50,345.50 333.84,354.75 338.19,345.50 342.53,345.50 346.88,345.50 351.22,349.75 355.56,363.50 359.91,366.00 364.25,352.25 368.60,364.75 372.94,381.50 377.28,378.50 381.63,406.00 385.97,438.00 390.32,438.00 394.66,438.00 399.00,401.00 403.35,376.00 407.69,357.25 412.04,368.50 416.38,385.50 420.72,378.50 425.07,385.50 429.41,382.25 433.76,392.25 438.10,410.50 442.44,393.50 446.79,382.25 451.13,359.75 455.48,345.50 459.82,353.50 464.16,347.25 468.51,345.50 472.85,345.50 477.20,356.00 481.54,398.00 485.88,387.25 490.23,393.50 494.57,382.25 498.92,386.00 503.26,388.50 507.60,391.50 511.95,376.00 516.29,351.00 520.64,384.75 524.98,404.75 529.32,426.00 533.67,408.50 538.01,437.25 542.36,431.00 546.70,438.00 551.04,438.00 555.39,429.75 559.73,418.50 564.08,438.00 568.42,438.00 572.76,425.50 577.11,428.50 581.45,437.25 585.80,438.00 590.14,438.00 594.48,438.00" fill="none" stroke="#ff1a1a" stroke-width="0.95" stroke-linejoin="round" stroke-linecap="round"/>
<polyline points="3.70,407.25 8.04,393.50 12.39,401.00 16.73,404.75 21.08,411.00 25.42,418.50 29.76,426.00 34.11,407.25 38.45,409.75 42.80,418.50 47.14,429.75 51.48,391.00 55.83,373.50 60.17,359.75 64.52,353.00 68.86,353.00 73.20,356.50 77.55,368.50 81.89,377.25 86.24,392.25 90.58,394.75 94.92,388.50 99.27,382.25 103.61,367.25 107.96,369.75 112.30,362.25 116.64,357.25 120.99,358.50 125.33,364.75 129.68,374.75 134.02,387.25 138.36,384.75 142.71,372.25 147.05,359.75 151.40,358.50 155.74,371.00 160.08,358.50 164.43,367.25 168.77,386.00 173.12,396.00 177.46,378.50 181.80,387.25 186.15,371.00 190.49,361.00 194.84,352.25 199.18,369.75 203.52,387.25 207.87,409.75 212.21,422.25 216.56,431.00 220.90,434.75 225.24,419.75 229.59,410.50 233.93,408.50 238.28,392.25 242.62,387.25 246.96,389.75 251.31,386.00 255.65,377.25 260.00,362.25 264.34,353.00 268.68,373.50 273.03,387.25 277.37,391.00 281.72,411.00 286.06,424.75 290.40,432.25 294.75,434.75 299.09,428.50 303.44,404.75 307.78,396.00 312.12,399.75 316.47,408.50 320.81,396.00 325.16,373.50 329.50,357.25 333.84,354.75 338.19,349.75 342.53,346.50 346.88,345.50 351.22,348.50 355.56,357.25 359.91,361.50 364.25,356.00 368.60,363.50 372.94,373.50 377.28,376.50 381.63,393.50 385.97,416.00 390.32,426.00 394.66,432.25 399.00,416.00 403.35,398.50 407.69,377.25 412.04,373.50 416.38,378.50 420.72,378.50 425.07,382.25 429.41,383.50 433.76,388.50 438.10,399.75 442.44,396.00 446.79,389.75 451.13,377.25 455.48,359.75 459.82,356.00 464.16,351.00 468.51,348.50 472.85,346.00 477.20,352.25 481.54,374.75 485.88,381.00 490.23,388.00 494.57,384.75 498.92,387.25 503.26,389.00 507.60,391.00 511.95,383.50 516.29,367.25 520.64,379.75 524.98,393.50 529.32,409.75 533.67,408.50 538.01,423.50 542.36,428.00 546.70,433.50 551.04,435.50 555.39,432.25 559.73,425.50 564.08,432.25 568.42,436.00 572.76,430.50 577.11,429.75 581.45,433.50 585.80,436.00 590.14,436.75 594.48,437.25 598.83,438.00 603.17,438.00 607.52,438.00" fill="none" stroke="#2a2ad8" stroke-width="0.95" stroke-linejoin="round" stroke-linecap="round"/>
<rect x="0" y="336" width="708" height="1.4" fill="#303030"/>
<path d="M674,336.5 Q676.5,336.5 676.5,339 V445.5 H0" fill="none" stroke="#505050" stroke-width="1.2"/>
<path d="M580.5,447 V444.5 H708" fill="#ffffff" stroke="#888888" stroke-width="1"/>
<rect x="581" y="445" width="127" height="2" fill="#ffffff"/>
<rect x="676.3" y="345" width="3" height="1" fill="#ff2020"/><text x="679.6" y="348.8" font-size="8.2" fill="#000000" stroke="#000000" stroke-width="0.18" textLength="27.6" lengthAdjust="spacingAndGlyphs">100.000</text><rect x="676.3" y="364" width="3" height="1" fill="#ff2020"/><text x="679.6" y="367.8" font-size="8.2" fill="#000000" stroke="#000000" stroke-width="0.18" textLength="23.4" lengthAdjust="spacingAndGlyphs">80.000</text><rect x="676.3" y="382" width="3" height="1" fill="#ff2020"/><text x="679.6" y="385.8" font-size="8.2" fill="#000000" stroke="#000000" stroke-width="0.18" textLength="23.4" lengthAdjust="spacingAndGlyphs">60.000</text><rect x="676.3" y="401" width="3" height="1" fill="#ff2020"/><text x="679.6" y="404.8" font-size="8.2" fill="#000000" stroke="#000000" stroke-width="0.18" textLength="23.4" lengthAdjust="spacingAndGlyphs">40.000</text><rect x="676.3" y="420" width="3" height="1" fill="#ff2020"/><text x="679.6" y="423.8" font-size="8.2" fill="#000000" stroke="#000000" stroke-width="0.18" textLength="23.4" lengthAdjust="spacingAndGlyphs">20.000</text><rect x="676.3" y="438" width="3" height="1" fill="#ff2020"/>
<rect x="678.5" y="434.5" width="32" height="8" fill="#ffffff" stroke="#ff3030" stroke-width="1"/>
<text x="679.6" y="441.8" font-size="8.2" fill="#1a1aff" stroke="#1a1aff" stroke-width="0.18" textLength="19.2" lengthAdjust="spacingAndGlyphs">0.320</text>
<rect x="0" y="337.4" width="50" height="7.6" fill="#ffffff"/>
<text x="-0.3" y="345" font-size="7.8" fill="#ff0000" stroke="#ff0000" stroke-width="0.18" textLength="81.5" lengthAdjust="spacingAndGlyphs">StochRSI(1) 14;3=0.320</text>
<text x="80.6" y="345" font-size="7.8" fill="#0000ff" stroke="#0000ff" stroke-width="0.18" textLength="20.2" lengthAdjust="spacingAndGlyphs">/0.236</text>
<text x="-2.0" y="9" font-size="8.2" fill="#1a1a1a" stroke="#1a1a1a" stroke-width="0.18" textLength="31.8" lengthAdjust="spacingAndGlyphs">GBP/JPY</text>
<text x="32.4" y="9" font-size="8.2" fill="#1a1a1a" stroke="#1a1a1a" stroke-width="0.18" textLength="71.8" lengthAdjust="spacingAndGlyphs">, 4 hours, # 140 / 300</text>
<text x="104.2" y="9" font-size="8.2" fill="#ff0066" stroke="#ff0066" stroke-width="0.18" textLength="71.5" lengthAdjust="spacingAndGlyphs">, MAE(1) 55=171.254</text>
<text x="175.8" y="9" font-size="8.2" fill="#1e821e" stroke="#1e821e" stroke-width="0.18" textLength="71.5" lengthAdjust="spacingAndGlyphs">, MAE(2) 34=171.582</text>
</svg>
</body></html>
